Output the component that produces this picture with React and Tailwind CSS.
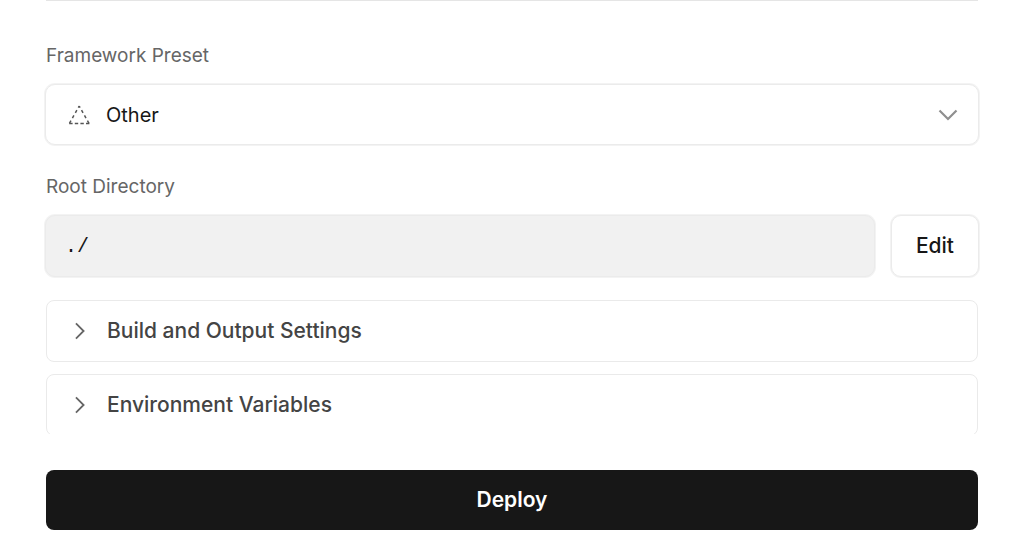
import React from "react";

function Chevron({ className, strokeWidth = 2 }) {
  return (
    <svg viewBox="0 0 20 20" className={className} fill="none" stroke="currentColor" strokeWidth={strokeWidth} aria-hidden="true">
      <path d="M1.5 5.5 10 14 18.5 5.5" />
    </svg>
  );
}

function DashedTriangle({ className }) {
  return (
    <svg viewBox="0 0 24 24" className={className} fill="none" stroke="currentColor" strokeWidth="1.5" aria-hidden="true">
      <path d="M11.2 3 1.4 20.4" strokeDasharray="3 3" strokeDashoffset="1.2" />
      <path d="M11.2 3 21 20.4" strokeDasharray="3 3" strokeDashoffset="1.2" />
      <path d="M1.2 20.5H21.5" strokeDasharray="3.4 2.2" />
    </svg>
  );
}

function Disclosure({ title }) {
  return (
    <button
      type="button"
      aria-expanded="false"
      className="flex h-[62px] w-full shrink-0 items-center gap-[18px] rounded-lg border border-[#eaeaea] bg-white px-6 text-left text-[21px] font-medium text-[#444]"
    >
      <Chevron className="size-[18px] -rotate-90 text-[#666]" />
      {title}
    </button>
  );
}

export default function App() {
  return (
    <main className="bg-white px-[45px] font-['Inter','Liberation_Sans',sans-serif]">
      <hr className="mx-px border-t border-[#e5e5e5]" />

      <form onSubmit={(e) => e.preventDefault()}>
        <label htmlFor="framework" className="mt-[41px] block px-px text-[19px] leading-7 text-[#666]">
          Framework Preset
        </label>
        <div className="mt-3.5 grid items-center">
          <select
            id="framework"
            defaultValue="other"
            className="col-start-1 row-start-1 h-[61px] w-full appearance-none rounded-[10px] border border-[#ebebeb] bg-white pr-16 pl-15 text-xl text-[#171717] ring-1 ring-[#f3f3f3]"
          >
            <option value="other">Other</option>
          </select>
          <DashedTriangle className="pointer-events-none col-start-1 row-start-1 ml-[23px] size-6 text-[#555]" />
          <Chevron strokeWidth={2.2} className="pointer-events-none col-start-1 row-start-1 mr-[21px] size-5 justify-self-end text-[#8f8f8f]" />
        </div>

        <label htmlFor="root" className="mt-7 block px-px text-[19px] leading-7 text-[#666]">
          Root Directory
        </label>
        <div className="mt-3.5 flex gap-4">
          <input
            id="root"
            readOnly
            value="./"
            className="h-[62px] min-w-0 flex-1 rounded-[10px] border border-[#ebebeb] bg-[#f1f1f1] px-[19px] font-['Liberation_Mono',monospace] text-xl text-[#171717] ring-1 ring-[#f3f3f3]"
          />
          <button type="button" className="h-[62px] rounded-[10px] border border-[#ebebeb] bg-white px-6 text-[21px] font-medium text-[#171717] ring-1 ring-[#f3f3f3]">
            Edit
          </button>
        </div>

        <div className="mx-px mt-[23px] flex h-[134px] flex-col gap-3 overflow-hidden">
          <Disclosure title="Build and Output Settings" />
          <Disclosure title="Environment Variables" />
        </div>

        <div className="mx-px mt-9">
          <button type="submit" className="h-15 w-full rounded-lg bg-[#171717] text-[21px] font-semibold text-white">
            Deploy
          </button>
        </div>
      </form>
    </main>
  );
}
